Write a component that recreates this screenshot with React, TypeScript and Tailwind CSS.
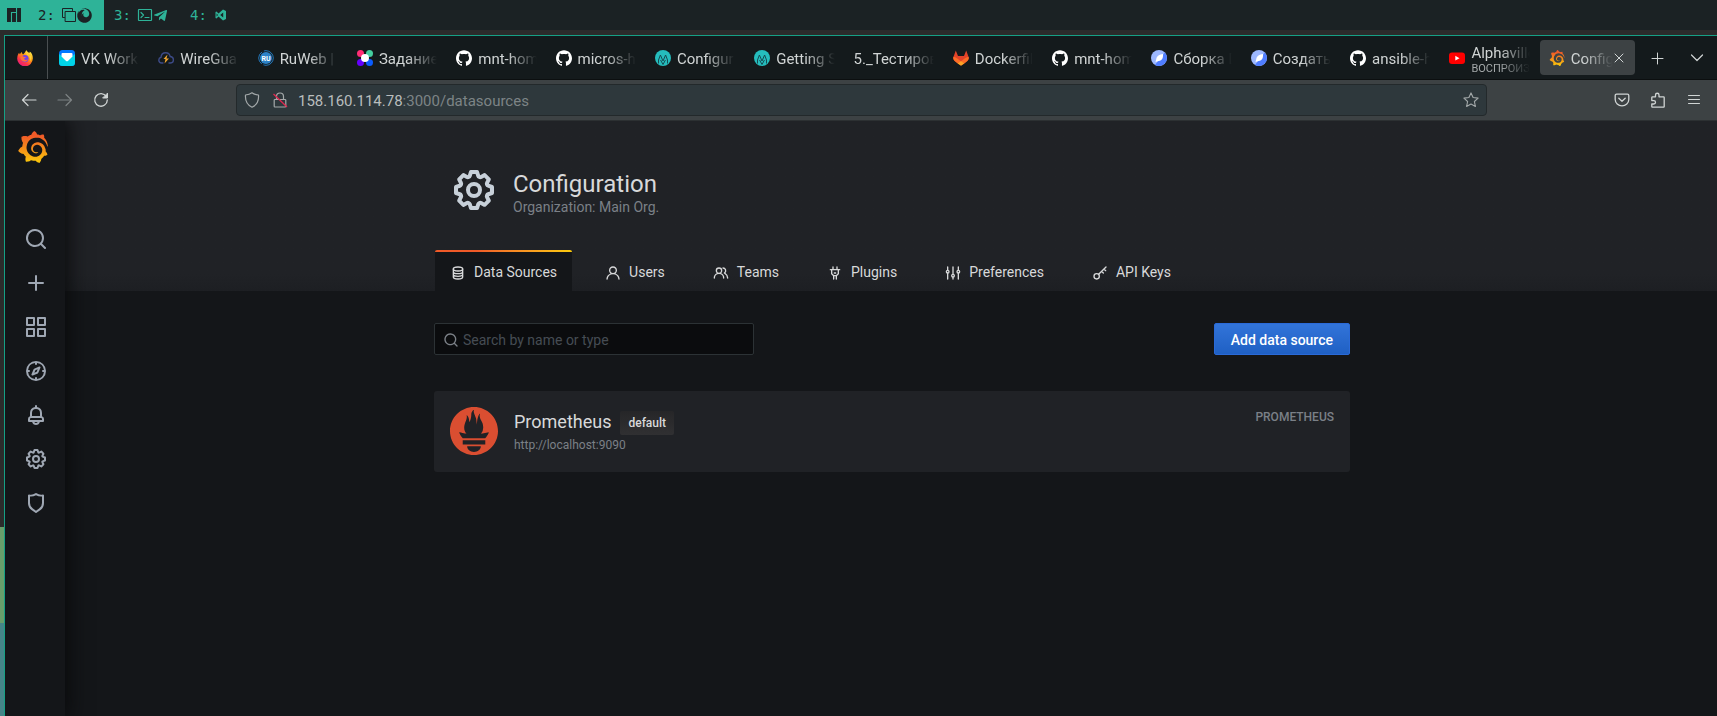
import React from "react";
import { SiGithub, SiGrafana, SiManjaro, SiPrometheus } from "react-icons/si";
import { FaFirefox, FaTelegramPlane } from "react-icons/fa";

type IconProps = { className?: string };

const unicons = {
  search:
    "M21.71,20.29,18,16.61A9,9,0,1,0,16.61,18l3.68,3.68a1,1,0,0,0,1.42,0A1,1,0,0,0,21.71,20.29ZM11,18a7,7,0,1,1,7-7A7,7,0,0,1,11,18Z",
  plus: "M19,11H13V5a1,1,0,0,0-2,0v6H5a1,1,0,0,0,0,2h6v6a1,1,0,0,0,2,0V13h6a1,1,0,0,0,0-2Z",
  apps: "M10,13H3a1,1,0,0,0-1,1v7a1,1,0,0,0,1,1h7a1,1,0,0,0,1-1V14A1,1,0,0,0,10,13ZM9,20H4V15H9ZM21,2H14a1,1,0,0,0-1,1v7a1,1,0,0,0,1,1h7a1,1,0,0,0,1-1V3A1,1,0,0,0,21,2ZM20,9H15V4h5Zm1,4H14a1,1,0,0,0-1,1v7a1,1,0,0,0,1,1h7a1,1,0,0,0,1-1V14A1,1,0,0,0,21,13Zm-1,7H15V15h5ZM10,2H3A1,1,0,0,0,2,3v7a1,1,0,0,0,1,1h7a1,1,0,0,0,1-1V3A1,1,0,0,0,10,2ZM9,9H4V4H9Z",
  compass:
    "M12,2A10,10,0,1,0,22,12,10,10,0,0,0,12,2Zm1,17.93V19a1,1,0,0,0-2,0v.93A8,8,0,0,1,4.07,13H5a1,1,0,0,0,0-2H4.07A8,8,0,0,1,11,4.07V5a1,1,0,0,0,2,0V4.07A8,8,0,0,1,19.93,11H19a1,1,0,0,0,0,2h.93A8,8,0,0,1,13,19.93ZM15.14,7.55l-5,2.12a1,1,0,0,0-.52.52l-2.12,5a1,1,0,0,0,.21,1.1,1,1,0,0,0,.7.3.93.93,0,0,0,.4-.09l5-2.12a1,1,0,0,0,.52-.52l2.12-5a1,1,0,0,0-1.31-1.31Zm-2.49,5.1-2.28,1,1-2.28,2.28-1Z",
  bell: "M18,13.18V10a6,6,0,0,0-5-5.91V3a1,1,0,0,0-2,0V4.09A6,6,0,0,0,6,10v3.18A3,3,0,0,0,4,16v2a1,1,0,0,0,1,1H8.14a4,4,0,0,0,7.72,0H19a1,1,0,0,0,1-1V16A3,3,0,0,0,18,13.18ZM8,10a4,4,0,0,1,8,0v3H8Zm4,10a2,2,0,0,1-1.72-1h3.44A2,2,0,0,1,12,20Zm6-3H6V16a1,1,0,0,1,1-1H17a1,1,0,0,1,1,1Z",
  cog: "M21.32,9.55l-1.89-.63.89-1.78A1,1,0,0,0,20.13,6L18,3.87a1,1,0,0,0-1.15-.19l-1.78.89-.63-1.89A1,1,0,0,0,13.5,2h-3a1,1,0,0,0-.95.68L8.92,4.57,7.14,3.68A1,1,0,0,0,6,3.87L3.87,6a1,1,0,0,0-.19,1.15l.89,1.78-1.89.63A1,1,0,0,0,2,10.5v3a1,1,0,0,0,.68.95l1.89.63-.89,1.78A1,1,0,0,0,3.87,18L6,20.13a1,1,0,0,0,1.15.19l1.78-.89.63,1.89a1,1,0,0,0,.95.68h3a1,1,0,0,0,.95-.68l.63-1.89,1.78.89A1,1,0,0,0,18,20.13L20.13,18a1,1,0,0,0,.19-1.15l-.89-1.78,1.89-.63A1,1,0,0,0,22,13.5v-3A1,1,0,0,0,21.32,9.55ZM20,12.78l-1.2.4A2,2,0,0,0,17.64,16l.57,1.14-1.1,1.1L16,17.64a2,2,0,0,0-2.79,1.16l-.4,1.2H11.22l-.4-1.2A2,2,0,0,0,8,17.64l-1.14.57-1.1-1.1L6.36,16A2,2,0,0,0,5.2,13.18L4,12.78V11.22l1.2-.4A2,2,0,0,0,6.36,8L5.79,6.89l1.1-1.1L8,6.36A2,2,0,0,0,10.82,5.2l.4-1.2h1.56l.4,1.2A2,2,0,0,0,16,6.36l1.14-.57,1.1,1.1L17.64,8a2,2,0,0,0,1.16,2.79l1.2.4ZM12,8a4,4,0,1,0,4,4A4,4,0,0,0,12,8Zm0,6a2,2,0,1,1,2-2A2,2,0,0,1,12,14Z",
  shield:
    "M19.63,3.65a1,1,0,0,0-.84-.2,8,8,0,0,1-6.22-1.27,1,1,0,0,0-1.14,0A8,8,0,0,1,5.21,3.45a1,1,0,0,0-.84.2A1,1,0,0,0,4,4.43v7.45a9,9,0,0,0,3.77,7.33l3.65,2.6a1,1,0,0,0,1.16,0l3.65-2.6A9,9,0,0,0,20,11.88V4.43A1,1,0,0,0,19.63,3.65ZM18,11.88a7,7,0,0,1-2.93,5.7L12,19.77,8.93,17.58A7,7,0,0,1,6,11.88V5.58a10,10,0,0,0,6-1.39,10,10,0,0,0,6,1.39Z",
  user: "M15.71,12.71a6,6,0,1,0-7.42,0,10,10,0,0,0-6.22,8.18,1,1,0,0,0,2,.22,8,8,0,0,1,15.9,0,1,1,0,0,0,1,.89h.11a1,1,0,0,0,.88-1.1A10,10,0,0,0,15.71,12.71ZM12,12a4,4,0,1,1,4-4A4,4,0,0,1,12,12Z",
  users:
    "M12.3,12.22A4.92,4.92,0,0,0,14,8.5a5,5,0,0,0-10,0,4.92,4.92,0,0,0,1.7,3.72A8,8,0,0,0,1,19.5a1,1,0,0,0,2,0,6,6,0,0,1,12,0,1,1,0,0,0,2,0A8,8,0,0,0,12.3,12.22ZM9,11.5a3,3,0,1,1,3-3A3,3,0,0,1,9,11.5Zm9.74.32A5,5,0,0,0,15,3.5a1,1,0,0,0,0,2,3,3,0,0,1,3,3,3,3,0,0,1-1.5,2.59,1,1,0,0,0-.5.84,1,1,0,0,0,.45.86l.39.26.13.07a7,7,0,0,1,4,6.38,1,1,0,0,0,2,0A9,9,0,0,0,18.74,11.82Z",
  plug: "M19,6H16V3a1,1,0,0,0-2,0V6H10V3A1,1,0,0,0,8,3V6H5A1,1,0,0,0,5,8H6v5a1,1,0,0,0,.29.71L9,16.41V21a1,1,0,0,0,2,0V17h2v4a1,1,0,0,0,2,0V16.41l2.71-2.7A1,1,0,0,0,18,13V8h1a1,1,0,0,0,0-2Zm-3,6.59L13.59,15H10.41L8,12.59V8h8ZM11,13h2a1,1,0,0,0,0-2H11a1,1,0,0,0,0,2Z",
};

function Uil({ name, className }: { name: keyof typeof unicons; className?: string }) {
  return (
    <svg viewBox="0 0 24 24" fill="currentColor" className={className} aria-hidden="true">
      <path d={unicons[name]} />
    </svg>
  );
}

function Stroke({ className, children, width = 2, box = "0 0 24 24" }: IconProps & { children: React.ReactNode; width?: number; box?: string }) {
  return (
    <svg viewBox={box} fill="none" stroke="currentColor" strokeWidth={width} strokeLinecap="round" strokeLinejoin="round" className={className} aria-hidden="true">
      {children}
    </svg>
  );
}

const DatabaseIcon = ({ className }: IconProps) => (
  <Stroke className={className}>
    <ellipse cx="12" cy="6" rx="7" ry="3" />
    <path d="M5 6v12c0 1.7 3 3 7 3s7-1.3 7-3V6M5 10c0 1.700 3 3 7 3s7-1.300 7-3M5 14c0 1.700 3 3 7 3s7-1.300 7-3" />
  </Stroke>
);

const SlidersIcon = ({ className }: IconProps) => (
  <Stroke className={className}>
    <path d="M4 3v5M4 12v9M12 3v11M12 18v3M20 3v5M20 12v9" />
    <circle cx="4" cy="10" r="2" />
    <circle cx="12" cy="16" r="2" />
    <circle cx="20" cy="10" r="2" />
  </Stroke>
);

const KeyIcon = ({ className }: IconProps) => (
  <Stroke className={className}>
    <circle cx="7" cy="17" r="4" />
    <path d="M10 14L21 3M18 6l2.500 2.500M14.500 9.500L17 12" />
  </Stroke>
);

const GrafanaLogo = ({ className }: IconProps) => <SiGrafana className={className} fill="url(#grafana-flame)" stroke="none" aria-hidden="true" />;

const FirefoxLogo = ({ className }: IconProps) => (
  <svg viewBox="0 0 16 16" className={className} aria-hidden="true">
    <defs>
      <linearGradient id="fx-body" x1="0.85" y1="0.05" x2="0.2" y2="1">
        <stop offset="0" stopColor="#fff44f" />
        <stop offset="0.4" stopColor="#ff980e" />
        <stop offset="0.7" stopColor="#ff3647" />
        <stop offset="1" stopColor="#e31587" />
      </linearGradient>
    </defs>
    <path fill="url(#fx-body)" d="M9.200 0c.8 1.500 2 2 2.900 3 .6-.3.700-1 .6-1.500C15 3 15.800 5.500 15.800 8A7.800 7.800 0 1 1 .3 7.400C.4 5.500 1.300 3.800 2.200 2.800c.1.700.3 1.200.6 1.500.5-.7 1.300-1.900 2.200-2.300-.1 1 .2 1.800 1 2.400C7 4 8.500 2 9.200 0z" />
    <circle cx="8" cy="8.600" r="3.600" fill="#7542e5" />
    <path d="M3.500 6.500c1.200-1 2.600-.6 3.500.4h2c-.4 1-1.500 1-2 1.500.4 1.600 2.400 2 4 .8-.8 2.200-3 3-5 2.100C4.300 10.500 3 8.500 3.500 6.500z" fill="#ff7139" />
    <path d="M9 1c.3 1.800 2.600 3 3.200 5.500.8 0 1.200-.7 1.300-1.500 1.300 2.500.8 5-.5 6.500 1-3-.8-5.500-2.500-6.500C9 4.300 8.600 2.500 9 1z" fill="#ffd43a" />
  </svg>
);

const MailLogo = ({ className }: IconProps) => (
  <svg viewBox="0 0 16 16" className={className} aria-hidden="true">
    <rect width="16" height="16" rx="3.500" fill="#07f" />
    <path d="M0 4l8 6 8-6v8.500a3.500 3.500 0 0 1-3.500 3.500h-9A3.500 3.500 0 0 1 0 12.500z" fill="#00d3e6" />
    <path d="M3.500 3h9a1 1 0 0 1 1 1v2.500L9.200 10.800a1.800 1.800 0 0 1-2.400 0L2.500 6.500V4a1 1 0 0 1 1-1z" fill="#fff" />
  </svg>
);

const CloudBolt = ({ className }: IconProps) => (
  <svg viewBox="0 0 16 16" fill="none" className={className} aria-hidden="true">
    <path d="M5 13H3.500A2.900 2.900 0 0 1 3 7.300C3.200 4.500 5.200 2.800 7.700 2.800c2.300 0 4 1.500 4.500 3.700 2 .2 3.200 1.500 3.200 3.300 0 1.900-1.300 3.200-3.200 3.200H11" stroke="#3c4a86" strokeWidth="1.400" strokeLinecap="round" />
    <path d="M9.500 4.500L5.500 9h2l-1 4.500L11 8.500H8.500z" fill="#f0a430" />
  </svg>
);

const RuLogo = ({ className }: IconProps) => (
  <svg viewBox="0 0 16 16" className={className} aria-hidden="true">
    <circle cx="8" cy="8" r="7.300" fill="none" stroke="#2376b8" strokeWidth="1" strokeDasharray="14 2" />
    <circle cx="8" cy="8" r="6" fill="#2c83c9" />
    <text x="8" y="10.500" fontSize="7" fontWeight="700" textAnchor="middle" fill="#fff" fontFamily="Roboto, sans-serif">RU</text>
  </svg>
);

const DotsLogo = ({ className }: IconProps) => (
  <svg viewBox="0 0 16 16" className={className} aria-hidden="true">
    <circle cx="3.500" cy="3.500" r="3.500" fill="#ff2e74" />
    <circle cx="12.500" cy="3.500" r="3.500" fill="#45cfa0" />
    <circle cx="3.500" cy="12.500" r="3.500" fill="#6500ff" />
    <circle cx="12.500" cy="12.500" r="3.500" fill="#0a5cff" />
    <circle cx="8" cy="8" r="4" fill="#fff" />
  </svg>
);

const MLogo = ({ className }: IconProps) => (
  <svg viewBox="0 0 16 16" className={className} aria-hidden="true">
    <circle cx="8" cy="8" r="8" fill="#25bdbd" />
    <path d="M3.500 13.500V10L5.400 5 8 11 10.600 5l1.900 5v3.500M5.600 10L8 14.500l2.400-4.500" fill="none" stroke="#164a52" strokeWidth="1" strokeLinejoin="round" />
  </svg>
);

const FeatherLogo = ({ className }: IconProps) => (
  <svg viewBox="0 0 16 16" className={className} aria-hidden="true">
    <circle cx="8" cy="8" r="8" fill="#9db8ff" />
    <path d="M13.700 2.400A8 8 0 0 1 4 14.900z" fill="#4f7dff" />
    <path d="M12 4c.3 3.500-.6 6.600-4.300 7L4.500 12l.8-3C5.700 5.800 8.500 4.500 12 4z" fill="#fff" />
  </svg>
);

const YoutubeLogo = ({ className }: IconProps) => (
  <svg viewBox="0 0 16 16" className={className} aria-hidden="true">
    <rect x="0" y="2.500" width="16" height="11.500" rx="3" fill="#f00" />
    <path d="M6.300 5.800l4.200 2.400-4.200 2.400z" fill="#fff" />
  </svg>
);

const Github = ({ className }: IconProps) => <SiGithub className={`${className} text-white`} aria-hidden="true" />;

const GitlabLogo = ({ className }: IconProps) => (
  <svg viewBox="0 0 16 16" className={className} aria-hidden="true">
    <path d="M2.800.5L5 6h6l2.200-5.500 2.300 6.200c.6 1.700.1 3.300-1.200 4.300L8 15.600 1.700 11C.4 10-.1 8.400.5 6.700z" fill="#e24329" />
    <path d="M15.500 6.700C13.500 7 12.200 8 8 11.200l3.400 2.200 2.900-2.400c1.300-1 1.800-2.600 1.200-4.300zM.5 6.700C2.500 7 3.800 8 8 11.200l-3.400 2.200L1.700 11C.4 10-.1 8.400.5 6.700z" fill="#fc6d26" />
    <path d="M4.600 13.400L8 11l3.400 2.400L8 15.800z" fill="#fca326" />
  </svg>
);

type BrowserTab = { title: string; Icon?: React.FC<IconProps>; note?: string; active?: boolean };

const browserTabs: BrowserTab[] = [
  { title: "VK Work", Icon: MailLogo },
  { title: "WireGua", Icon: CloudBolt },
  { title: "RuWeb |", Icon: RuLogo },
  { title: "Задание", Icon: DotsLogo },
  { title: "mnt-hom", Icon: Github },
  { title: "micros-h", Icon: Github },
  { title: "Configur", Icon: MLogo },
  { title: "Getting S", Icon: MLogo },
  { title: "5._Тестиров" },
  { title: "Dockerfil", Icon: GitlabLogo },
  { title: "mnt-hom", Icon: Github },
  { title: "Сборка D", Icon: FeatherLogo },
  { title: "Создать", Icon: FeatherLogo },
  { title: "ansible-h", Icon: Github },
  { title: "Alphaville", Icon: YoutubeLogo, note: "ВОСПРОИЗ" },
  { title: "Config", Icon: GrafanaLogo, active: true },
];

function WorkspaceBar() {
  return (
    <nav aria-label="Workspaces" className="flex h-[30px] bg-[#1b2224] font-['DejaVu_Sans_Mono','Liberation_Mono',monospace] text-sm text-[#2eb398]">
      <button aria-label="1" className="flex w-7 items-center justify-center bg-[#2eb398] text-[#1b2224]">
        <SiManjaro className="size-[14px]" />
      </button>
      <button className="flex w-[76px] items-center gap-[6px] bg-[#2eb398] pl-[10px] text-[#1b2224]">
        <span>2:</span>
        <span className="flex items-center">
          <Stroke className="size-4" width={1} box="0 0 16 16">
            <path d="M3.500 10.500h-2v-9h10v2M4.500 4.500h10v10h-10z" strokeLinejoin="miter" />
          </Stroke>
          <FaFirefox className="size-[15px]" />
        </span>
      </button>
      <button className="flex w-[76px] items-center gap-[6px] pl-[10px]">
        <span>3:</span>
        <span className="flex items-center">
          <Stroke className="size-4" width={1.200} box="0 0 16 16">
            <rect x="1.500" y="2.500" width="13" height="11" rx=".5" />
            <path d="M4 5.500L6.500 8 4 10.500M8 10.500h4" />
          </Stroke>
          <FaTelegramPlane className="size-[15px]" />
        </span>
      </button>
      <button className="flex items-center gap-[6px] pl-[10px]">
        <span>4:</span>
        <svg viewBox="0 0 16 16" fill="currentColor" fillRule="evenodd" className="size-4" aria-hidden="true">
          <path d="M10 2.500L13 4v8l-3 1.500L5.500 9.600 3.500 11.500 2.500 11V5l1-.5L5.500 6.400zM3.600 6.500v3L5 8zM10.200 5.500L7.200 8l3 2.500z" />
        </svg>
      </button>
    </nav>
  );
}

function BrowserTabs() {
  return (
    <div className="flex h-11 border-b border-[#0c0f10] bg-[#141a1c] text-[15px] leading-5 text-[#d0d4d4]">
      <button aria-label="Firefox" className="flex w-[43px] shrink-0 items-center border-r border-[#4a4f51] pl-3">
        <FirefoxLogo className="size-4" />
      </button>
      <div role="tablist" className="flex min-w-0 flex-1">
        {browserTabs.map(({ title, Icon, note, active }, i) => (
          <div key={i} className="flex min-w-0 flex-1 px-[2px] py-1">
            <button
              role="tab"
              aria-selected={!!active}
              className={`flex min-w-0 flex-1 items-center rounded pl-[9px] text-left ${active ? "bg-[#3d4244] pr-[10px]" : "pr-[6px]"}`}
            >
              {Icon && <Icon className="mr-[6px] size-4 shrink-0" />}
              <span className="min-w-0 flex-1 overflow-hidden pt-[2px] whitespace-nowrap [mask-image:linear-gradient(to_left,transparent,black_30px)]">
                <span className="block">{title}</span>
                {note && <span className="block text-[11px] leading-3 text-[#a4a9aa]">{note}</span>}
              </span>
              {active && (
                <Stroke className="size-3 shrink-0" width={1} box="0 0 12 12">
                  <path d="M2 2l8 8M10 2l-8 8" />
                </Stroke>
              )}
            </button>
          </div>
        ))}
      </div>
      <div className="flex w-20 shrink-0 items-center gap-6 pl-3">
        <button aria-label="New tab">
          <Stroke className="size-4" width={1} box="0 0 16 16">
            <path d="M8.500 3v11M3 8.500h11" />
          </Stroke>
        </button>
        <button aria-label="List all tabs">
          <Stroke className="size-4" width={1.200} box="0 0 16 16">
            <path d="M2.500 5L8 10.500 13.500 5" />
          </Stroke>
        </button>
      </div>
    </div>
  );
}

function AddressBar() {
  return (
    <div className="flex h-[41px] items-center border-b border-[#2c3032] bg-[#3d4244] pr-[15px] pl-4 text-[#d0d4d4]">
      <div className="flex w-[215px] shrink gap-5">
        <button aria-label="Back">
          <Stroke className="size-4" width={1.200} box="0 0 16 16">
            <path d="M15 8H1.500M7 2.500L1.500 8 7 13.500" />
          </Stroke>
        </button>
        <button aria-label="Forward" className="text-[#7d8284]">
          <Stroke className="size-4" width={1.200} box="0 0 16 16">
            <path d="M1 8h13.500M9 2.500L14.500 8 9 13.500" />
          </Stroke>
        </button>
        <button aria-label="Reload">
          <Stroke className="size-4" width={1.300} box="0 0 16 16">
            <path d="M13.300 4.500A6.300 6.300 0 1 0 14.300 8" />
            <path d="M14.500 1.500v4.500H10z" fill="currentColor" strokeWidth="1" />
          </Stroke>
        </button>
      </div>
      <div className="flex h-8 w-[1251px] min-w-0 shrink items-center rounded border border-[#23292b] bg-[#2e383c] px-[7px] text-[#a4a9aa]">
        <Stroke className="size-4 shrink-0" width={1.200} box="0 0 16 16">
          <path d="M8 .8c2 1.500 4 2 6.500 2.200.4 5-1.500 10-6.500 12.200C3 13 1.100 8 1.500 3 4 2.800 6 2.300 8 .8z" />
        </Stroke>
        <svg viewBox="0 0 16 16" fill="none" className="ml-3 size-4 shrink-0" aria-hidden="true">
          <path d="M4.500 7V4.500a3.500 3.500 0 0 1 7 0V7M3 7.500h10a.8.8 0 0 1 .8.8v5.900a.8.8 0 0 1-.8.8H3a.8.8 0 0 1-.8-.8V8.300a.8.8 0 0 1 .8-.8z" stroke="currentColor" strokeWidth="1.200" />
          <path d="M1.500 2L15 15" stroke="#e22850" strokeWidth="1.300" />
        </svg>
        <p className="ml-[10px] flex-1 truncate pt-px text-[15px] leading-5 text-[#7d8486]">
          <span className="text-[#b9bdbd]">158.160.114.78</span>:3000/datasources
        </p>
        <button aria-label="Bookmark this page">
          <Stroke className="size-4" width={1.100} box="0 0 16 16">
            <path d="M8 .9l2.100 4.600 5 .6-3.700 3.400 1 5L8 12.100l-4.400 2.400 1-5L.9 6.100l5-.6z" />
          </Stroke>
        </button>
      </div>
      <div className="ml-auto flex gap-5">
        <button aria-label="Save to Pocket">
          <Stroke className="size-4" width={1.300} box="0 0 16 16">
            <path d="M2.500 2.200h11a1.300 1.300 0 0 1 1.300 1.300V7.500a6.800 6.300 0 0 1-13.600 0V3.500a1.300 1.300 0 0 1 1.300-1.300zM4.800 6.300L8 9.300l3.200-3" />
          </Stroke>
        </button>
        <button aria-label="Extensions">
          <Stroke className="size-4" width={1.300} box="0 0 16 16">
            <path d="M5.500 4.800V3a1.700 1.700 0 0 1 3.500 0v1.800h4.500a.7.7 0 0 1 .7.7v9a.7.7 0 0 1-.7.700h-11a.7.7 0 0 1-.7-.7V12h2a1.700 1.700 0 0 0 0-3.400h-2V5.500a.7.7 0 0 1 .7-.7z" />
          </Stroke>
        </button>
        <button aria-label="Open application menu">
          <Stroke className="size-4" width={1} box="0 0 16 16">
            <path d="M2.500 3.500h11M2.500 7.500h11M2.500 11.500h11" />
          </Stroke>
        </button>
      </div>
    </div>
  );
}

const sideItems: { label: string; icon: keyof typeof unicons }[] = [
  { label: "Search", icon: "search" },
  { label: "Create", icon: "plus" },
  { label: "Dashboards", icon: "apps" },
  { label: "Explore", icon: "compass" },
  { label: "Alerting", icon: "bell" },
  { label: "Configuration", icon: "cog" },
  { label: "Server Admin", icon: "shield" },
];

function SideMenu() {
  return (
    <nav aria-label="Main menu" className="relative z-10 flex w-[60px] shrink-0 flex-col items-center bg-[#141619] shadow-[0_0_20px_2px_#08090a]">
      <a href="#home" aria-label="Home" className="mt-[10px] mr-[5px]">
        <GrafanaLogo className="size-8" />
      </a>
      <ul className="mt-[54px] ml-[2px]">
        {sideItems.map(({ label, icon }) => (
          <li key={icon}>
            <a href={`#${icon}`} aria-label={label} className="flex h-11 items-center text-[#9fa7b3]">
              <Uil name={icon} className="size-6" />
            </a>
          </li>
        ))}
      </ul>
    </nav>
  );
}

const pageTabs = [
  { label: "Data Sources", icon: <DatabaseIcon className="size-4" /> },
  { label: "Users", icon: <Uil name="user" className="size-4" /> },
  { label: "Teams", icon: <Uil name="users" className="size-4" /> },
  { label: "Plugins", icon: <Uil name="plug" className="size-4" /> },
  { label: "Preferences", icon: <SlidersIcon className="size-4" /> },
  { label: "API Keys", icon: <KeyIcon className="size-4" /> },
];

function PageHeader() {
  return (
    <header className="bg-[#202226] bg-linear-to-b from-[#202226] from-90% to-[#1d1f23] pr-8 pl-[34px]">
      <div className="mx-auto max-w-[916px]">
        <div className="flex items-start pt-[45px] pl-4">
          <Uil name="cog" className="size-12 text-[#c7d0d9]" />
          <div className="ml-[15px] pt-[6px]">
            <h1 className="text-2xl leading-6 text-[#d8d9da]">Configuration</h1>
            <p className="text-sm leading-[22px] text-[#7b8087]">Organization: Main Org.</p>
          </div>
        </div>
        <nav aria-label="Configuration sections" className="mt-8 flex gap-[18px] pl-px">
          {pageTabs.map(({ label, icon }, i) => (
            <a
              key={label}
              href={`#${label}`}
              className={`flex h-[41px] flex-col text-sm leading-5 text-[#d8d9da] ${i === 0 ? "rounded-t-[2px] bg-[#141619]" : ""}`}
            >
              <span className={`h-[2px] rounded-t-[2px] ${i === 0 ? "bg-linear-to-r from-[#f05a28] from-30% to-[#fbca0a]" : ""}`} />
              <span className="flex flex-1 items-center gap-2 px-[15px]">
                <span className="mt-[2px]">{icon}</span>
                {label}
              </span>
            </a>
          ))}
        </nav>
      </div>
    </header>
  );
}

function DataSources() {
  return (
    <main className="pt-8 pr-8 pl-[34px]">
      <div className="mx-auto max-w-[916px]">
        <div className="flex justify-between">
          <label className="flex h-8 w-80 items-center gap-1 rounded-[2px] border border-[#2c3235] bg-[#0b0c0e] px-2 pt-[2px] text-[#7b8087]">
            <Uil name="search" className="size-4" />
            <input
              type="text"
              aria-label="Search by name or type"
              placeholder="Search by name or type"
              className="min-w-0 flex-1 bg-transparent text-sm text-[#c7d0d9] outline-none placeholder:text-[#464c54]"
            />
          </label>
          <button className="h-8 rounded-[2px] border border-[#2a6ad8] bg-linear-to-b from-[#3274d9] to-[#1f60c4] px-4 pt-[2px] text-sm font-medium text-white">
            Add data source
          </button>
        </div>
        <ul className="mt-9">
          <li className="flex items-start rounded-[3px] bg-[#202226] px-4 pt-4 pb-[17px]">
            <SiPrometheus className="size-12 shrink-0 text-[#da4e31]" aria-hidden="true" />
            <div className="ml-4 flex-1 pt-1">
              <div className="flex items-start gap-[9px]">
                <h2 className="text-lg leading-[22px] text-[#d8d9da]">Prometheus</h2>
                <span className="rounded-[2px] bg-linear-to-b from-[#262628] to-[#303032] px-2 py-1 text-xs leading-4 font-medium text-[#d8d9da]">default</span>
              </div>
              <p className="text-xs leading-5 text-[#7b8087]">http://localhost:9090</p>
            </div>
            <span className="text-xs leading-5 font-medium text-[#7b8087]">PROMETHEUS</span>
          </li>
        </ul>
      </div>
    </main>
  );
}

export default function App() {
  return (
    <div className="flex min-h-screen flex-col bg-[#2b2b2b] font-[Roboto,'Noto_Sans',sans-serif]">
      <svg className="absolute size-0" aria-hidden="true">
        <defs>
          <linearGradient id="grafana-flame" x1="0" y1="0" x2="0" y2="1">
            <stop offset="0.15" stopColor="#f05a28" />
            <stop offset="1" stopColor="#fbca0a" />
          </linearGradient>
        </defs>
      </svg>
      <WorkspaceBar />
      <div className="flex flex-1">
        <div className="flex w-1 shrink-0 flex-col" aria-hidden="true">
          <div className="h-[497px]" />
          <div className="h-24 bg-[#689d6a]" />
          <div className="flex-1 bg-[#458588]" />
        </div>
        <div className="mt-[5px] flex min-w-0 flex-1 flex-col border-t border-l border-[#16a085]">
          <BrowserTabs />
          <AddressBar />
          <div className="flex flex-1 overflow-hidden bg-[#141619]">
            <SideMenu />
            <div className="min-w-0 flex-1">
              <PageHeader />
              <DataSources />
            </div>
          </div>
        </div>
      </div>
    </div>
  );
}
